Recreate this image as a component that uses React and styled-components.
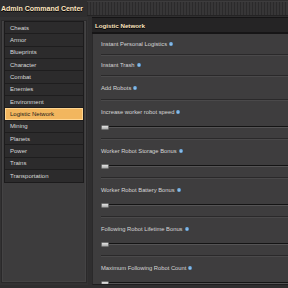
import React from "react";
import styled, { createGlobalStyle } from "styled-components";

const Global = createGlobalStyle`
  html, body { margin: 0; padding: 0; background: #2f2e2f; overflow: hidden; }
  * { box-sizing: border-box; }
`;

const Window = styled.div`
  width: 288px;
  height: 288px;
  display: flex;
  flex-direction: column;
  background: #2f2e2f;
  overflow: hidden;
  font-family: "Liberation Sans", Arial, sans-serif;
`;

const TitleBar = styled.div`
  height: 17px;
  display: flex;
  align-items: center;
  gap: 4px;
  padding: 1px 0 1px 1px;
`;

const Title = styled.h1`
  margin: 0;
  padding-top: 1px;
  font-weight: bold;
  font-size: 7px;
  line-height: 10px;
  color: #ffe6c0;
  white-space: nowrap;
  text-shadow: 0 1px 0 #000;
`;

const DragHandle = styled.div`
  flex: 1;
  align-self: stretch;
  background: repeating-linear-gradient(90deg, #2b2a2b 0 1px, #373637 1px 3px);
  box-shadow: inset 0 1px 0 #3d3c3d, inset 0 -1px 0 #242324;
`;

const Body = styled.div`
  flex: 1;
  min-height: 0;
  display: flex;
  gap: 4px;
  padding-bottom: 3px;
`;

const Sidebar = styled.div`
  width: 88px;
  padding: 3px 1px 2px 1px;
  background: #333233;
  display: flex;
`;

const ScrollPane = styled.div`
  flex: 1;
  background: #3d3c3d;
  border: 1px solid #2a292a;
  box-shadow: inset 0 0 0 1px #444344;
  padding: 0 2px;
`;

const ListBox = styled.ul`
  list-style: none;
  margin: 0;
  padding: 0;
  border: 1px solid #1c1b1c;
  background: #2a292a;
`;

const ListItem = styled.li`
  height: 12.33px;
  display: flex;
  align-items: center;
  padding-left: 5px;
  font-size: 6px;
  color: ${(p) => (p.$active ? "#1a1a1a" : "#dadada")};
  background: ${(p) => (p.$active ? "#f2b65e" : "#2c2b2c")};
  border-bottom: 1px solid #1e1d1e;
  box-shadow: ${(p) => (p.$active ? "inset 0 0 0 1px #ffd590" : "none")};
  white-space: nowrap;
  &:last-child { border-bottom: none; }
`;

const Main = styled.div`
  flex: 1;
  display: flex;
  flex-direction: column;
  min-width: 0;
`;

const Header = styled.div`
  height: 17px;
  display: flex;
  align-items: center;
  padding-left: 3px;
  background: #252425;
  border-top: 1px solid #151415;
  border-bottom: 2px solid #161516;
`;

const HeaderTitle = styled.h2`
  margin: 0;
  font-weight: bold;
  font-size: 6.2px;
  color: #ffe6c0;
  text-shadow: 0 1px 0 #000;
  white-space: nowrap;
`;

const Content = styled.div`
  flex: 1;
  background: #3e3d3e;
  padding-left: 8px;
  border-left: 1px solid #2a292a;
  border-bottom: 1px solid #1e1d1e;
  overflow: hidden;
`;

const Row = styled.div`
  height: ${(p) => p.$h}px;
  display: flex;
  flex-direction: column;
  justify-content: ${(p) => (p.$slider ? "flex-start" : "center")};
  padding-top: ${(p) => (p.$slider ? 8 : 0)}px;
  border-bottom: 1px solid #2a292a;
  box-shadow: 0 1px 0 #4a494a;
`;

const Label = styled.div`
  display: flex;
  align-items: center;
  height: 7px;
  font-size: 5.8px;
  color: #d6d6d6;
  white-space: nowrap;
`;

const Info = styled.svg`
  width: 4px;
  height: 4px;
  margin-left: 2px;
  flex: none;
`;

const Slider = styled.div`
  display: flex;
  align-items: center;
  height: 5px;
  margin-top: 9.5px;
`;

const Thumb = styled.div`
  width: 8px;
  height: 5px;
  flex: none;
  background: linear-gradient(#e2e2e2, #acacac);
  border: 1px solid #707070;
  border-radius: 1px;
`;

const Track = styled.div`
  flex: 1;
  height: 2px;
  border-top: 1px solid #141414;
  border-bottom: 1px solid #555455;
`;

const InfoIcon = () => (
  <Info viewBox="0 0 4 4">
    <circle cx="2" cy="2" r="2" fill="#5e9ed6" />
    <rect x="1.6" y="1.5" width="0.8" height="1.8" fill="#dff0ff" />
    <rect x="1.6" y="0.6" width="0.8" height="0.6" fill="#dff0ff" />
  </Info>
);

const categories = [
  "Cheats", "Armor", "Blueprints", "Character", "Combat", "Enemies", "Environment",
  "Logistic Network", "Mining", "Planets", "Power", "Trains", "Transportation",
];

const settings = [
  { label: "Instant Personal Logistics", h: 21 },
  { label: "Instant Trash", h: 21 },
  { label: "Add Robots", h: 24 },
  { label: "Increase worker robot speed", h: 39, slider: true },
  { label: "Worker Robot Storage Bonus", h: 39, slider: true },
  { label: "Worker Robot Battery Bonus", h: 39, slider: true },
  { label: "Following Robot Lifetime Bonus", h: 39, slider: true },
  { label: "Maximum Following Robot Count", h: 39, slider: true },
];

export default function App() {
  return (
    <>
      <Global />
      <Window>
        <TitleBar>
          <Title>Admin Command Center</Title>
          <DragHandle />
        </TitleBar>
        <Body>
          <Sidebar>
            <ScrollPane>
              <ListBox>
                {categories.map((c) => (
                  <ListItem key={c} $active={c === "Logistic Network"}>{c}</ListItem>
                ))}
              </ListBox>
            </ScrollPane>
          </Sidebar>
          <Main>
            <Header>
              <HeaderTitle>Logistic Network</HeaderTitle>
            </Header>
            <Content>
              {settings.map((s) => (
                <Row key={s.label} $h={s.h} $slider={s.slider}>
                  <Label>{s.label}<InfoIcon /></Label>
                  {s.slider && (
                    <Slider>
                      <Thumb />
                      <Track />
                    </Slider>
                  )}
                </Row>
              ))}
            </Content>
          </Main>
        </Body>
      </Window>
    </>
  );
}
